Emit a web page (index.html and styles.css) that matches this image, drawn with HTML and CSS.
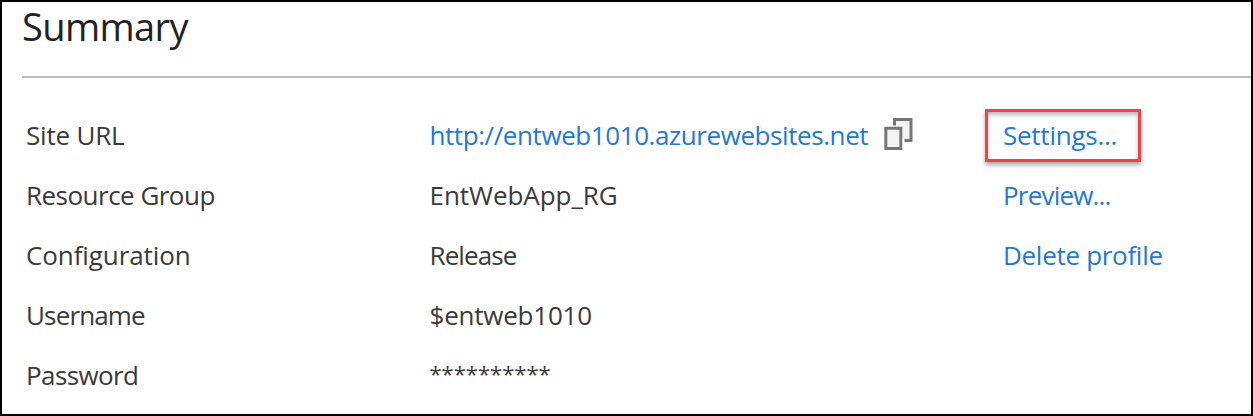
FILE: index.html
```html
<!DOCTYPE html>
<html lang="en">
<head>
<meta charset="utf-8">
<title>Summary</title>
<link rel="stylesheet" href="styles.css">
</head>
<body>
<main class="panel">
  <h1 class="title">Summary</h1>
  <div class="grid">
    <span class="label site">Site URL</span>
    <span class="value link">http://entweb1010.azurewebsites.net
      <svg class="copy" width="30" height="34" viewBox="0 0 30 34" fill="#f3f3f3" stroke="#777" stroke-width="3"><path d="M10.5 8.5V2.5H27V23.5H20.5"/><path d="M1.8 11.2H16.8V31.5H1.8Z"/></svg>
    </span>
    <a class="action boxed">Settings...</a>
    <span class="label group">Resource Group</span>
    <span class="value group-name">EntWebApp_RG</span>
    <a class="action preview">Preview...</a>
    <span class="label config">Configuration</span>
    <span class="value release">Release</span>
    <a class="action delete">Delete profile</a>
    <span class="label user">Username</span>
    <span class="value user-name">$entweb1010</span>
    <span></span>
    <span class="label pass">Password</span>
    <span class="value stars">**********</span>
    <span></span>
  </div>
</main>
</body>
</html>
```
FILE: styles.css
```css
* { box-sizing: border-box; }
body { margin: 0; background: #fff; color: #3a3a3a; font-family: "Open Sans", "Noto Sans", sans-serif; }
.panel { width: 1253px; height: 416px; border: 2px solid #000; padding-left: 20px; overflow: hidden; }
.title { margin: 0; height: 76px; border-bottom: 2px solid #bdbdbd; color: #222; font-size: 38px; line-height: 48px; font-weight: 400; letter-spacing: -0.6px; }
.grid { display: grid; grid-template-columns: 403px 555px 1fr; grid-auto-rows: 60px; padding: 27px 0 0 5px; font-size: 26px; line-height: 60px; white-space: nowrap; }
.label { margin-left: -1px; }
.value { display: flex; align-items: center; margin-left: -0.5px; }
.copy { flex: none; margin: -3px 0 0 16px; }
.link, .action { color: #2678d0; }
.action { padding-left: 18px; }
.link { letter-spacing: -0.42px; }
.boxed { width: 156px; height: 53px; margin-top: 4px; line-height: 46px; border: 3px solid #ea4549; padding-left: 15px; letter-spacing: -0.25px; box-shadow: 0 3px 4px #aaa, inset 0 3px 4px #bbb; }
.site { letter-spacing: -0.2px; }
.group { letter-spacing: -0.52px; }
.config { letter-spacing: -0.1px; }
.user { letter-spacing: -0.85px; }
.pass { letter-spacing: -0.6px; }
.group-name { letter-spacing: -0.05px; }
.release { letter-spacing: -0.9px; }
.user-name { letter-spacing: -0.22px; }
.preview { letter-spacing: -0.8px; }
.delete { letter-spacing: -0.3px; }
.stars { padding-bottom: 4px; font-size: 22px; }
```
